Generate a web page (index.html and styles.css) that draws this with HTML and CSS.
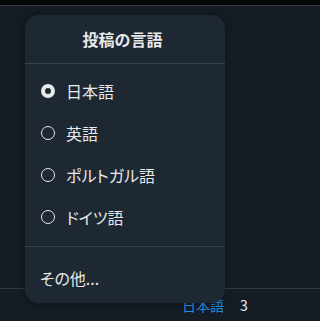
FILE: index.html
```html
<!DOCTYPE html>
<html lang="ja">
<head>
<meta charset="utf-8">
<link rel="stylesheet" href="styles.css">
</head>
<body>
<div class="page">
  <div class="topbar"></div>
  <div class="content"></div>
  <div class="bottom">
    <span class="lang">日本語</span>
    <span class="count">3</span>
  </div>
</div>
<div class="menu">
  <div class="menu-title">投稿の言語</div>
  <div class="menu-list">
    <div class="item"><span class="radio checked"></span><span>日本語</span></div>
    <div class="item"><span class="radio"></span><span>英語</span></div>
    <div class="item"><span class="radio"></span><span>ポルトガル語</span></div>
    <div class="item"><span class="radio"></span><span>ドイツ語</span></div>
  </div>
  <div class="menu-foot">その他...</div>
</div>
</body>
</html>
```
FILE: styles.css
```css
html {
  background: #151c23;
}
html, body {
  margin: 0;
  padding: 0;
}
body {
  font-family: "Noto Sans CJK JP", "Noto Sans", sans-serif;
  font-feature-settings: "palt";
  color: #e7e9ea;
  height: 321px;
  overflow: hidden;
  position: relative;
}
.page {
  display: flex;
  flex-direction: column;
  height: 321px;
}
.topbar {
  height: 5px;
  background: #04070a;
  border-bottom: 1px solid #323b44;
}
.content {
  height: 282px;
  border-bottom: 1px solid #323b44;
}
.bottom {
  display: flex;
  align-items: center;
  height: 32px;
  padding-left: 182px;
  font-size: 14px;
  gap: 16px;
  white-space: nowrap;
}
.lang {
  color: #1d8fe6;
}
.count {
  color: #e7e9ea;
}
.menu {
  position: absolute;
  top: 15px;
  left: 25px;
  width: 200px;
  height: 288px;
  background: #1e2833;
  border-radius: 14px;
  box-shadow: 0 0 10px rgba(0, 0, 0, 0.35);
  display: flex;
  flex-direction: column;
  overflow: hidden;
}
.menu-title {
  height: 48px;
  display: flex;
  align-items: center;
  justify-content: center;
  font-weight: 700;
  font-size: 16px;
  border-bottom: 1px solid #38444d;
  padding-right: 5px;
}
.menu-list {
  padding: 6px 0 8px;
  border-bottom: 1px solid #38444d;
}
.item {
  height: 42px;
  display: flex;
  align-items: center;
  padding-left: 16px;
  gap: 11px;
  font-size: 16px;
}
.radio {
  width: 14px;
  height: 14px;
  box-sizing: border-box;
  border: 1.5px solid #e7e9ea;
  border-radius: 50%;
}
.radio.checked {
  border: 4.5px solid #e7e9ea;
  background: #1e2833;
}
.menu-foot {
  flex: 1;
  display: flex;
  align-items: center;
  padding: 6px 0 0 15px;
  font-size: 16px;
}
```
